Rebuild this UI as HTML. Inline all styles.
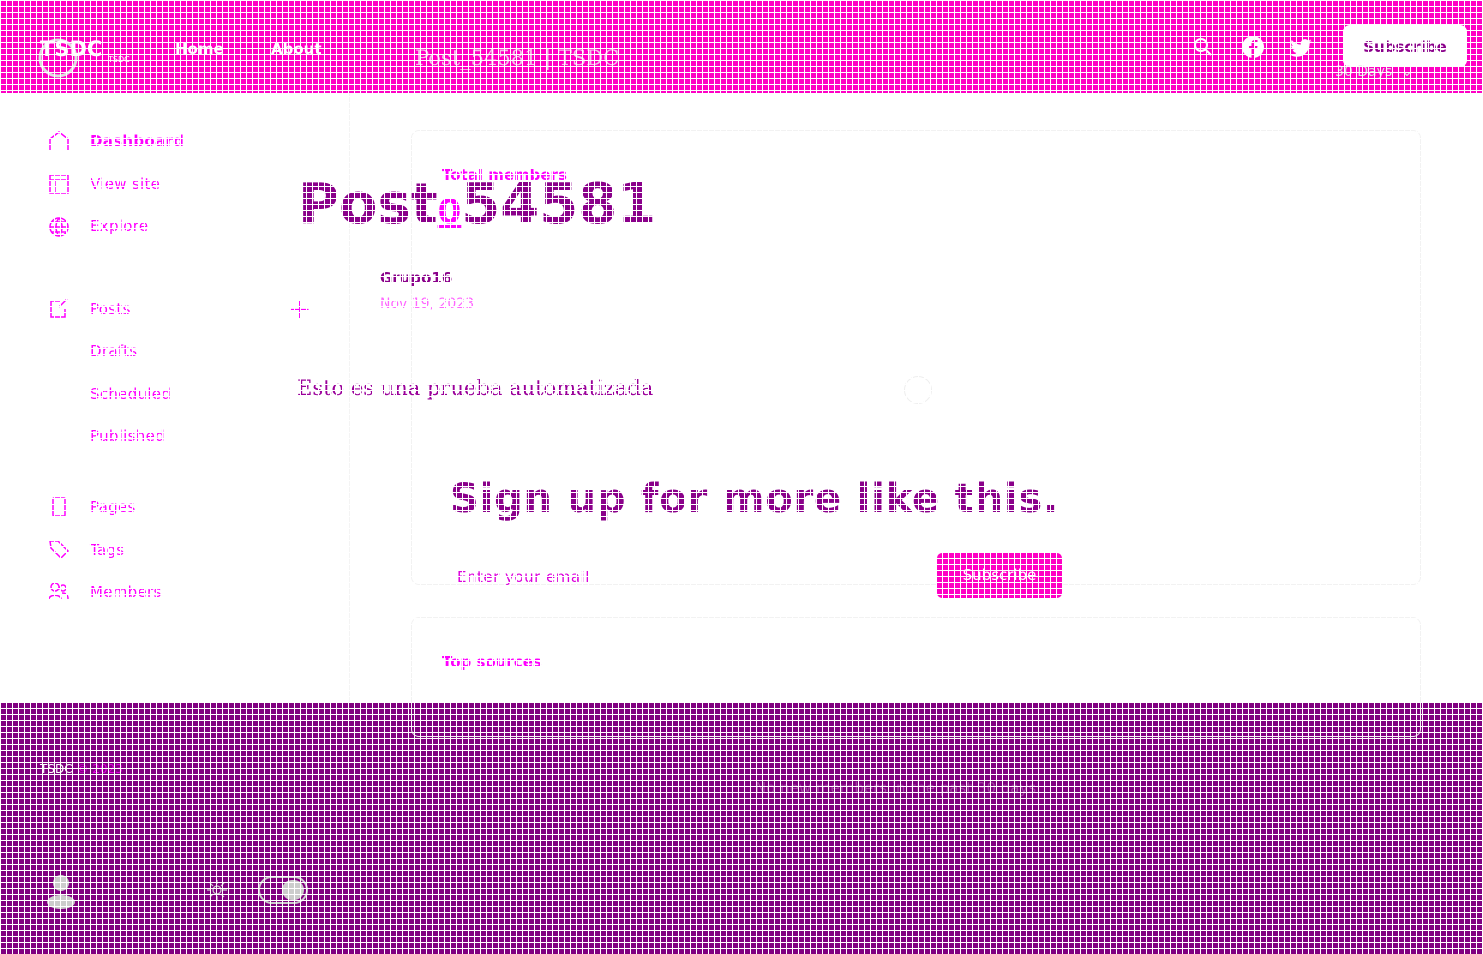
<!DOCTYPE html>
<html><head><meta charset="utf-8">
<style>
*{margin:0;padding:0;box-sizing:border-box}
body{width:1483px;height:954px;position:relative;overflow:hidden;background:#fff;font-family:"DejaVu Sans",sans-serif}
.a{position:absolute;white-space:nowrap}
#hdr{position:absolute;left:0;top:0;width:1483px;height:93px;background:#ff00c4}
#ftr{position:absolute;left:0;top:703px;width:1483px;height:251px;background:#800080}
#grid{position:absolute;left:0;top:0;width:1483px;height:954px;pointer-events:none;
background-image:linear-gradient(to right,#fff 0,#fff 1px,transparent 1px),linear-gradient(to bottom,#fff 0,#fff 1px,transparent 1px);
background-size:6px 6px;z-index:10}
.nav{color:#ff00ff;font-size:15px;letter-spacing:0.3px}
.hv{color:#fff;font-size:15px;font-weight:bold}
.card{position:absolute;border:1px solid #f2f2f2;border-radius:8px}
</style></head><body>
<div id="hdr"></div>
<div id="ftr"></div>

<!-- header -->
<svg class="a" style="left:38px;top:34px" width="110" height="46" viewBox="0 0 110 46">
<circle cx="20" cy="24" r="18" fill="none" stroke="#ddd" stroke-width="3"/>
<text x="2" y="22" font-family="DejaVu Sans" font-weight="bold" font-size="21" fill="#fff">TSDC</text>
<text x="70" y="28" font-family="DejaVu Sans" font-size="8" fill="#fff">TSDC</text>
</svg>
<div class="a hv" style="left:175px;top:40px">Home</div>
<div class="a hv" style="left:271px;top:40px">About</div>
<div class="a" style="left:415px;top:46px;color:#f4bfe9;font-size:21px;font-family:'DejaVu Serif',serif">Post_54581 | TSDC</div>
<svg class="a" style="left:1193px;top:37px" width="20" height="20" viewBox="0 0 20 20"><circle cx="8" cy="8" r="6" fill="none" stroke="#fff" stroke-width="2"/><path d="M12.5 12.5 L18 18" stroke="#fff" stroke-width="2"/></svg>
<svg class="a" style="left:1242px;top:36px" width="22" height="22" viewBox="0 0 22 22"><circle cx="11" cy="11" r="11" fill="#fff"/><path d="M12 22V13h3l.5-3H12V8c0-1 .4-1.5 1.5-1.5H15.5V4h-2.5C10.5 4 9.5 5.5 9.5 7.5V10H7v3h2.5v9z" fill="#ff00c4"/></svg>
<svg class="a" style="left:1290px;top:39px" width="22" height="18" viewBox="0 0 24 20"><path d="M24 2.5c-.9.4-1.8.6-2.8.8 1-.6 1.8-1.6 2.1-2.7-1 .6-2 1-3.1 1.2A4.9 4.9 0 0 0 11.8 6.3 14 14 0 0 1 1.7 1.1a4.9 4.9 0 0 0 1.5 6.6c-.8 0-1.6-.2-2.2-.6 0 2.4 1.7 4.4 3.9 4.8-.7.2-1.5.2-2.2.1.6 2 2.4 3.4 4.6 3.4A9.9 9.9 0 0 1 0 17.5 14 14 0 0 0 7.5 19.700c9 0 14-7.5 14-14v-.6c1-.7 1.8-1.6 2.5-2.6z" fill="#fff"/></svg>
<div class="a" style="left:1343px;top:25px;width:124px;height:42px;background:#fff;border-radius:7px;color:#8a008a;font-weight:bold;font-size:15px;text-align:center;line-height:44px">Subscribe</div>
<div class="a" style="left:1335px;top:64px;color:#ddd;font-size:14px">30 Days &nbsp;⌄</div>

<!-- sidebar -->
<svg class="a" style="left:48px;top:130px" width="22" height="22" viewBox="0 0 22 22" fill="none" stroke="#ff00ff" stroke-width="1.5"><path d="M2 20V9L11 2l9 7v11"/></svg>
<div class="a nav" style="left:90px;top:132px;font-weight:bold">Dashboard</div>
<svg class="a" style="left:48px;top:173px" width="22" height="22" viewBox="0 0 22 22" fill="none" stroke="#ff00ff" stroke-width="1.5"><rect x="2" y="2" width="18" height="18"/><path d="M2 7h18M7 7v13"/></svg>
<div class="a nav" style="left:90px;top:175px">View site</div>
<svg class="a" style="left:48px;top:216px" width="22" height="22" viewBox="0 0 22 22" fill="none" stroke="#ff00ff" stroke-width="1.5"><circle cx="11" cy="11" r="9"/><path d="M2 11h18M11 2c-4 5-4 13 0 18M11 2c4 5 4 13 0 18M4 6h14M4 16h14"/></svg>
<div class="a nav" style="left:90px;top:217px">Explore</div>
<svg class="a" style="left:48px;top:297px" width="22" height="22" viewBox="0 0 22 22" fill="none" stroke="#ff00ff" stroke-width="1.5"><path d="M12 4H3v16h14v-8"/><path d="M19 2l-8 8"/></svg>
<div class="a nav" style="left:90px;top:300px">Posts</div>
<div class="a" style="left:288px;top:297px;color:#ff00ff;font-size:28px;line-height:24px;font-weight:300">+</div>
<div class="a nav" style="left:90px;top:342px">Drafts</div>
<div class="a nav" style="left:90px;top:385px">Scheduled</div>
<div class="a nav" style="left:90px;top:427px">Published</div>
<svg class="a" style="left:48px;top:496px" width="22" height="22" viewBox="0 0 22 22" fill="none" stroke="#ff00ff" stroke-width="1.5"><rect x="5" y="2" width="12" height="18" rx="1"/></svg>
<div class="a nav" style="left:90px;top:498px">Pages</div>
<svg class="a" style="left:48px;top:538px" width="22" height="22" viewBox="0 0 22 22" fill="none" stroke="#ff00ff" stroke-width="1.5"><path d="M2 3h8l10 10-7 7L3 10z"/></svg>
<div class="a nav" style="left:90px;top:541px">Tags</div>
<svg class="a" style="left:48px;top:580px" width="22" height="22" viewBox="0 0 22 22" fill="none" stroke="#ff00ff" stroke-width="1.5"><circle cx="7" cy="7" r="4"/><circle cx="15" cy="8" r="3"/><path d="M1 19c0-5 12-5 12 0M14 13c4 0 6 2 6 6"/></svg>
<div class="a nav" style="left:90px;top:583px">Members</div>
<div class="a" style="left:349px;top:93px;width:1px;height:610px;background:#f4f4f4"></div>

<!-- cards -->
<div class="card" style="left:411px;top:130px;width:1010px;height:455px"></div>
<div class="card" style="left:411px;top:617px;width:1010px;height:120px"></div>

<div class="a" style="left:442px;top:166px;color:#ff00ff;font-size:15px;font-weight:bold">Total members</div>
<div class="a" style="left:298px;top:172px;color:#8a008a;font-size:56px;font-weight:bold;letter-spacing:0px">Post<span style="color:#ff00ff;font-size:34px;text-decoration:underline">0</span>54581</div>
<div class="a" style="left:380px;top:269px;color:#8a008a;font-size:15px;font-weight:bold">Grupo16</div>
<div class="a" style="left:380px;top:296px;color:#ff66ff;font-size:14px">Nov 19, 2023</div>
<div class="a" style="left:297px;top:376px;color:#9a009a;font-size:21px;font-family:'DejaVu Serif',serif">Esto es una prueba automatizada</div>
<div class="a" style="left:904px;top:376px;width:28px;height:28px;border:1px solid #eee;border-radius:50%"></div>
<div class="a" style="left:450px;top:476px;color:#8a008a;font-size:40px;font-weight:bold;letter-spacing:0.8px">Sign up for more like this.</div>
<div class="a" style="left:457px;top:568px;color:#dd00dd;font-size:15px;letter-spacing:0.5px">Enter your email</div>
<div class="a" style="left:937px;top:553px;width:125px;height:45px;background:#ff00c4;border-radius:5px;color:#fff;font-size:15px;text-align:center;line-height:45px">Subscribe</div>
<div class="a" style="left:442px;top:653px;color:#ff00ff;font-size:15px;font-weight:bold">Top sources</div>

<!-- footer -->
<div class="a" style="left:40px;top:762px;color:#fff;font-size:12px">TSDC <span style="color:#e000e0">© 2023</span></div>
<div class="a" style="left:755px;top:779px;color:#a040a0;font-size:15px">No new members in the past 30 days</div>
<svg class="a" style="left:45px;top:874px" width="32" height="36" viewBox="0 0 32 36"><circle cx="16" cy="9" r="8" fill="#ccc"/><ellipse cx="16" cy="28" rx="14" ry="7" fill="#ccc"/></svg>
<svg class="a" style="left:205px;top:878px" width="24" height="24" viewBox="0 0 24 24" fill="none" stroke="#ccc" stroke-width="1.2"><circle cx="12" cy="12" r="4"/><path d="M12 2v4M12 18v4M2 12h4M18 12h4M5 5l3 3M16 16l3 3M5 19l3-3M16 8l3-3"/></svg>
<div class="a" style="left:258px;top:876px;width:50px;height:28px;border:2px solid #ccc;border-radius:14px"><div style="position:absolute;right:2px;top:2px;width:22px;height:20px;background:#ccc;border-radius:10px"></div></div>

<div id="grid"></div>
</body></html>
